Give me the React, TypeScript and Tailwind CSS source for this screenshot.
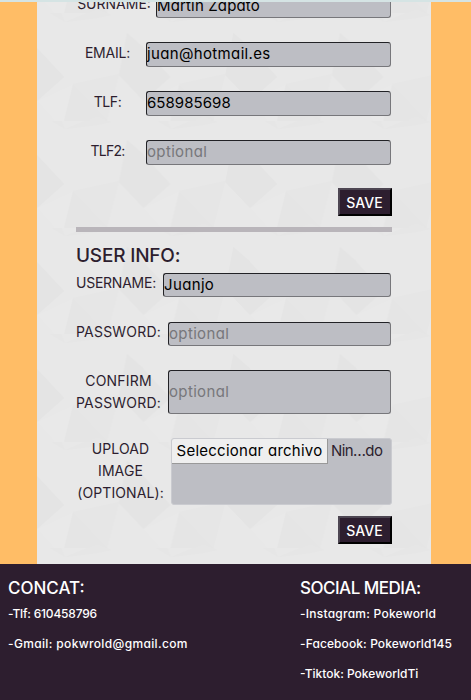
const facets: [string, string][] = [
  ["60,20 90,20 82,62 27,62", "#e8e8e8"],
  ["0,35 27,64 0,88", "#e4e4e4"],
  ["106,35 82,62 107,88", "#e4e4e4"],
  ["82,62 90,20 107,35 107,88", "#e4e4e4"],
  ["36,71 0,88 27,118", "#e9e9e9"],
  ["36,71 27,107 70,107", "#e5e5e5"],
  ["36,71 82,61 70,107", "#e6e6e6"],
  ["28,9 60,-4 74,2 60,5", "#e6e6e6"],
  ["28,9 0,-8 20,-8", "#e6e6e6"],
  ["28,116 60,103 74,109 60,112", "#e6e6e6"],
];

function Backdrop() {
  return (
    <svg className="absolute inset-0 -z-10 h-full w-full" aria-hidden="true">
      <defs>
        <pattern id="facets" width="106.5" height="107" x="0" y="11" patternUnits="userSpaceOnUse">
          <rect width="107" height="107" fill="#e8e8e8" />
          {facets.map(([points, fill]) => (
            <polygon key={points} points={points} fill={fill} />
          ))}
        </pattern>
      </defs>
      <rect width="100%" height="100%" fill="url(#facets)" />
    </svg>
  );
}

const inset =
  "mr-px min-w-0 flex-1 rounded-[3px] border border-t-[#222226] border-l-[#222226] border-r-[#77777b] border-b-[#77777b] bg-[#bdbec4] pl-0 text-[15px] text-black outline-none placeholder:text-[#77777b]";

type FieldProps = {
  label: string;
  labelClass: string;
  value?: string;
  inputClass?: string;
  rowClass: string;
};

function Field({ label, labelClass, value, inputClass = "tracking-[0.35px]", rowClass }: FieldProps) {
  return (
    <div className={`flex ${rowClass}`}>
      <label className={`shrink-0 text-center text-[14px] leading-[22px] font-[380] ${labelClass}`}>{label}</label>
      <input className={`${inset} ${inputClass}`} defaultValue={value} placeholder="optional" />
    </div>
  );
}

function Save({ className }: { className: string }) {
  return (
    <button
      className={`ml-auto block h-7 w-[54px] border-2 border-t-[#4d4652] border-l-[#4d4652] border-r-black border-b-black bg-[#2d1e2f] pr-px text-[14px] leading-[23px] font-medium text-white ${className}`}
    >
      SAVE
    </button>
  );
}

export default function App() {
  return (
    <div className="h-[700px] w-[471px] overflow-hidden bg-[#ffbd66] font-[Inter,sans-serif] text-[#2d1e2f] [font-feature-settings:'cv11']">
      <div className="h-[2px] bg-[#d5e4e4]" />
      <main className="relative isolate ml-[37px] h-[562px] w-[394px] overflow-hidden bg-[#e8e8e8] pr-[39px] pl-10">
        <Backdrop />
        <Field label="SURNAME:" labelClass="w-[79px] pr-[5px] -mt-[9px]" value="Martin Zapato" rowClass="h-4" inputClass="-mt-[7px] tracking-[0.15px]" />
        <Field label="EMAIL:" labelClass="w-[61px] mr-2 tracking-[-0.2px]" value="juan@hotmail.es" rowClass="mt-6 h-[25px]" />
        <Field label="TLF:" labelClass="w-[61px] mr-2 tracking-[-0.4px]" value="658985698" rowClass="mt-6 h-[25px]" inputClass="tracking-[0.05px]" />
        <Field label="TLF2:" labelClass="w-[61px] mr-2 tracking-[-0.8px]" rowClass="mt-6 h-[25px]" />
        <Save className="mt-[23px]" />
        <div className="mt-[11px] -ml-px h-[5px] bg-[#b9b5ba]" />
        <h2 className="-ml-px mt-[8px] mb-[2px] text-[19px] leading-[31px] font-medium tracking-[-0.2px]">USER INFO:</h2>
        <Field label="USERNAME:" labelClass="-ml-px w-[80px] mr-[7px] -mt-px tracking-[-0.25px]" value="Juanjo" rowClass="h-6" />
        <Field label="PASSWORD:" labelClass="-ml-px w-[85px] mr-[7px] -mt-px tracking-[0.2px]" rowClass="mt-[25px] h-6" />
        <Field label="CONFIRM PASSWORD:" labelClass="-ml-px w-[85px] mr-[7px] tracking-[0.2px]" rowClass="mt-6 h-11" />
        <div className="mt-6 flex h-[67px]">
          <label className="mr-[7px] w-[87px] shrink-0 text-center text-[14px] leading-[22px] font-[380] tracking-[0.1px]">UPLOAD IMAGE (OPTIONAL):</label>
          <div className="flex min-w-0 flex-1 items-start overflow-hidden rounded-[3px] border border-[#cacbd0] bg-[#bdbec4] text-[15px]">
            <button className="h-[25px] w-[156px] shrink-0 border-r border-b border-[#999] bg-[#efefef] tracking-[0.25px] whitespace-nowrap text-black">Seleccionar archivo</button>
            <span className="ml-[3px] leading-6 tracking-[-0.6px] whitespace-nowrap">Nin…do</span>
          </div>
        </div>
        <Save className="mt-[11px]" />
      </main>
      <footer className="flex h-[136px] justify-between bg-[#2d1e2f] px-2 pt-[11px] text-[12px] leading-[18px] font-medium text-white">
        <section>
          <h3 className="text-[17px] leading-[26px]">CONCAT:</h3>
          <p className="mt-1 tracking-[-0.2px]">-Tlf: 610458796</p>
          <p className="mt-3 tracking-[0.35px]">-Gmail: pokwrold@gmail.com</p>
        </section>
        <section className="w-[163px]">
          <h3 className="text-[17px] leading-[26px] tracking-[-0.5px]">SOCIAL MEDIA:</h3>
          <p className="mt-1 tracking-[0.24px]">-Instagram: Pokeworld</p>
          <p className="mt-3 tracking-[0.1px]">-Facebook: Pokeworld145</p>
          <p className="mt-3">-Tiktok: PokeworldTi</p>
        </section>
      </footer>
    </div>
  );
}
